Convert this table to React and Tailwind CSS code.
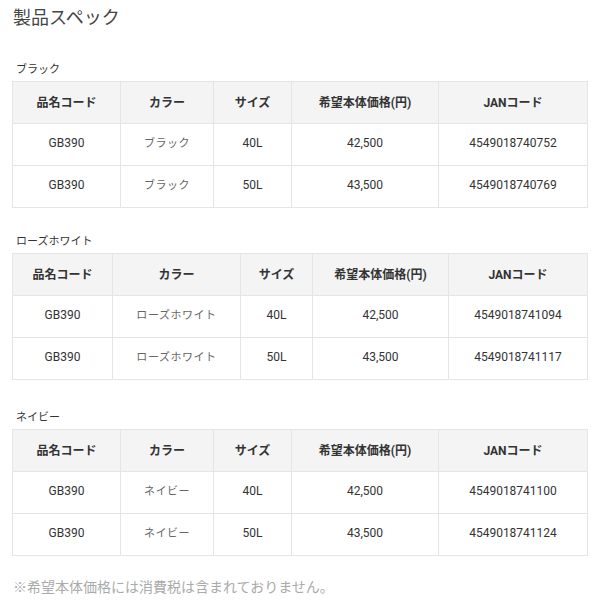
import React from "react";

const font = { fontFamily: 'Roboto, "Noto Sans CJK JP", sans-serif' };

const tables = [
  {
    label: "ブラック",
    widths: ["w-[108px]", "w-[93px]", "w-[78px]", "w-[147px]", "w-[149px]"],
    rows: [
      ["GB390", "ブラック", "40L", "42,500", "4549018740752"],
      ["GB390", "ブラック", "50L", "43,500", "4549018740769"],
    ],
    mt: "mt-[30px]",
  },
  {
    label: "ローズホワイト",
    widths: ["w-[100px]", "w-[128px]", "w-[72px]", "w-[136px]", "w-[139px]"],
    rows: [
      ["GB390", "ローズホワイト", "40L", "42,500", "4549018741094"],
      ["GB390", "ローズホワイト", "50L", "43,500", "4549018741117"],
    ],
    mt: "mt-[26px]",
  },
  {
    label: "ネイビー",
    widths: ["w-[108px]", "w-[93px]", "w-[78px]", "w-[147px]", "w-[149px]"],
    rows: [
      ["GB390", "ネイビー", "40L", "42,500", "4549018741100"],
      ["GB390", "ネイビー", "50L", "43,500", "4549018741124"],
    ],
    mt: "mt-[30px]",
  },
];

const headers = ["品名コード", "カラー", "サイズ", "希望本体価格(円)", "JANコード"];

function Spec({ t }) {
  return (
    <div className={t.mt}>
      <div className="pl-[4px] text-[11px] leading-[16px] text-[#333]">{t.label}</div>
      <table className="mt-[3px] w-[575px] table-fixed border-collapse">
        <thead>
          <tr>
            {headers.map((h, i) => (
              <th
                key={i}
                className={`${t.widths[i]} h-[42px] border border-[#e5e5e5] bg-[#f4f4f4] text-center text-[12px] font-bold text-[#333]`}
              >
                {h}
              </th>
            ))}
          </tr>
        </thead>
        <tbody>
          {t.rows.map((r, ri) => (
            <tr key={ri}>
              {r.map((c, ci) => (
                <td
                  key={ci}
                  className={`h-[42px] border border-[#e5e5e5] text-center ${
                    ci === 1
                      ? "pb-[1px] text-[11px] tracking-[0.05em] text-[#666]"
                      : "pb-[3px] text-[12px] text-[#333]"
                  }`}
                >
                  {c}
                </td>
              ))}
            </tr>
          ))}
        </tbody>
      </table>
    </div>
  );
}

export default function App() {
  return (
    <div className="w-[600px] h-[600px] bg-white pl-[12px] pt-[4px]" style={font}>
      <h1 className="pl-[1px] text-[18px] leading-[28px] font-normal text-[#444]">製品スペック</h1>
      {tables.map((t, i) => (
        <Spec key={i} t={t} />
      ))}
      <p className="mt-[21px] pl-[1px] text-[14px] leading-[20px] text-[#aaa]">
        ※希望本体価格には消費税は含まれておりません。
      </p>
    </div>
  );
}
